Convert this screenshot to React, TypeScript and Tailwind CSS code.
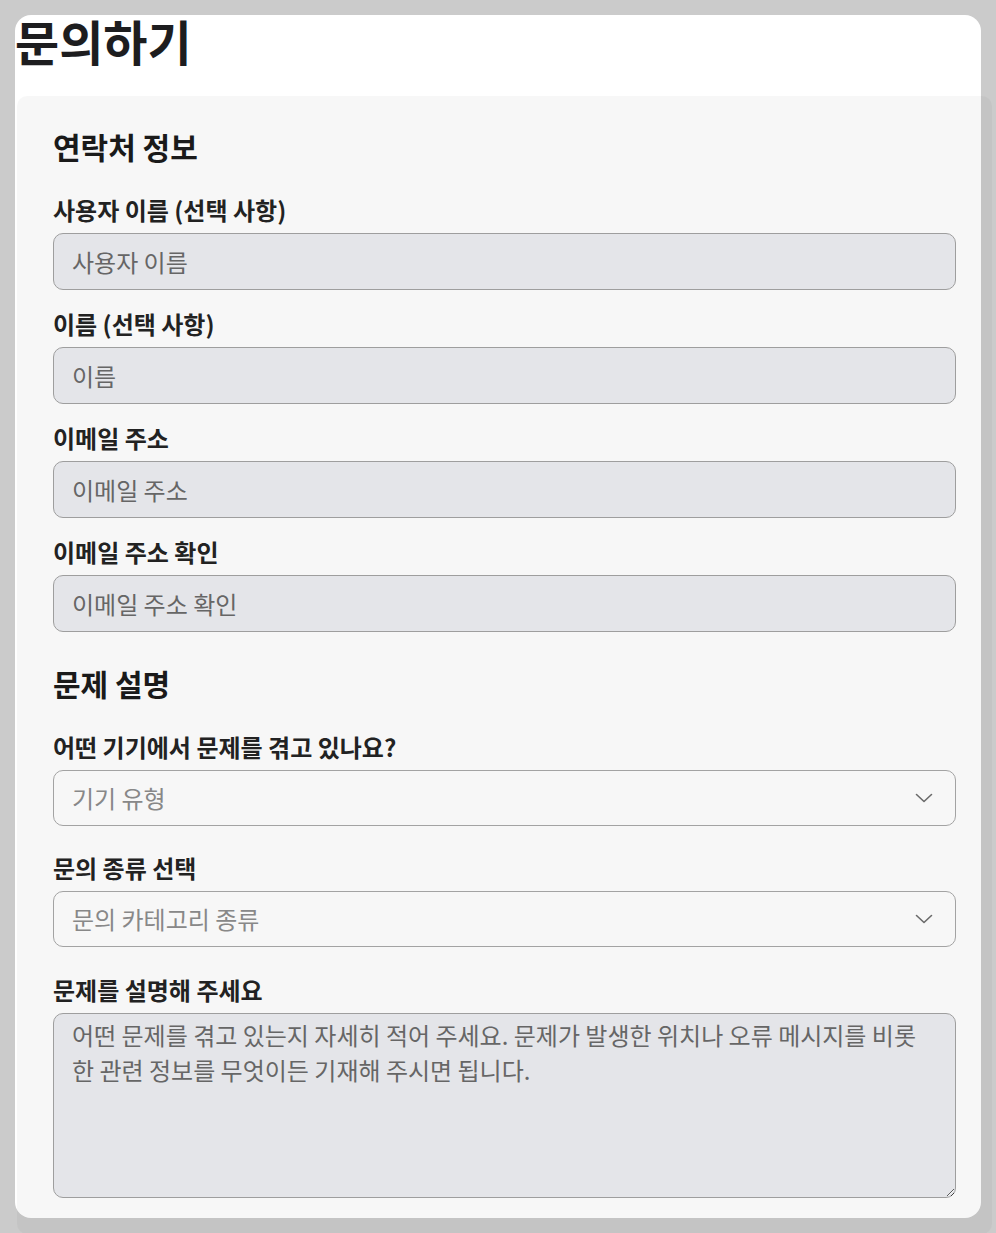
import React from 'react'

const font = "font-['Noto_Sans_CJK_KR','Noto_Sans',sans-serif]"

function Label({ children }: { children: React.ReactNode }) {
  return <label className="block text-[24px] leading-[30px] font-semibold text-[#222] mb-2">{children}</label>
}

function TextField({ label, placeholder }: { label: string; placeholder: string }) {
  return (
    <div className="mb-[19px]">
      <Label>{label}</Label>
      <input
        placeholder={placeholder}
        className="w-full h-[57px] rounded-[10px] border border-[#9e9e9e] bg-[#e4e5e9] px-[18px] text-[24px] text-[#333] placeholder:text-[#666] outline-none"
      />
    </div>
  )
}

function SelectField({ label, placeholder, last }: { label: string; placeholder: string; last?: boolean }) {
  return (
    <div className={last ? 'mb-[28px]' : 'mb-[27px]'}>
      <Label>{label}</Label>
      <div className="flex items-center justify-between h-[56px] rounded-[10px] border border-[#a3a3a3] pl-[18px] pr-[22px] text-[24px] text-[#888]">
        <span>{placeholder}</span>
        <svg width="18" height="10" viewBox="0 0 18 10" fill="none">
          <path d="M1.5 1.5 9 8.5l7.5-7" stroke="#6a6a6a" strokeWidth="1.6" strokeLinecap="round" strokeLinejoin="round" />
        </svg>
      </div>
    </div>
  )
}

export default function App() {
  return (
    <div className={`h-[1233px] overflow-hidden bg-[#cbcbcb] p-[15px] ${font}`}>
      <div className="h-[1203px] rounded-2xl bg-white">
        <h1 className="text-[48px] leading-[50px] font-bold text-[#1d1d1f] mb-[31px]">문의하기</h1>

        <div className="ml-[2px] w-[975px] flex flex-col rounded-[10px] bg-black/[0.03] px-9 pt-[33px] pb-9">
          <h2 className="text-[30px] leading-[34px] font-bold text-[#1a1a1a] mb-8">연락처 정보</h2>
          <TextField label="사용자 이름 (선택 사항)" placeholder="사용자 이름" />
          <TextField label="이름 (선택 사항)" placeholder="이름" />
          <TextField label="이메일 주소" placeholder="이메일 주소" />
          <TextField label="이메일 주소 확인" placeholder="이메일 주소 확인" />

          <h2 className="mt-[15px] text-[30px] leading-[34px] font-bold text-[#1a1a1a] mb-[32px]">문제 설명</h2>
          <SelectField label="어떤 기기에서 문제를 겪고 있나요?" placeholder="기기 유형" />
          <SelectField label="문의 종류 선택" placeholder="문의 카테고리 종류" last />

          <div>
            <Label>문제를 설명해 주세요</Label>
            <textarea
              placeholder={'어떤 문제를 겪고 있는지 자세히 적어 주세요. 문제가 발생한 위치나 오류 메시지를 비롯\n한 관련 정보를 무엇이든 기재해 주시면 됩니다.'}
              className="block w-full h-[185px] rounded-[10px] border border-[#9e9e9e] bg-[#e4e5e9] px-[18px] pt-[3px] pb-[5px] text-[24px] leading-[35px] text-[#333] placeholder:text-[#666] outline-none"
            />
          </div>
        </div>
      </div>
    </div>
  )
}
